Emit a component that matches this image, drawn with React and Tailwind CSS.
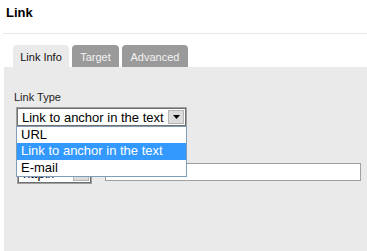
import React from 'react';

const LINK_TYPES = ['URL', 'Link to anchor in the text', 'E-mail'];

const Arrow = () => (
  <svg width="7" height="4" viewBox="0 0 7 4">
    <polygon points="0,0 7,0 3.5,4" fill="#000" />
  </svg>
);

const SelectBox = ({ value, className, button = 'w-[16px]' }) => (
  <div className={`flex bg-white border border-[#a0a0a0] shadow-[inset_0_0_0_1px_#6f6f6f] p-[2px] ${className}`}>
    <div className="flex-1 pl-[3px] text-[13px] leading-[15px] text-black whitespace-nowrap overflow-hidden">{value}</div>
    <div className={`${button} flex items-center justify-center bg-[#dcdcdc] border border-[#b5b5b5]`}>
      <Arrow />
    </div>
  </div>
);

export default function App() {
  const selected = 1;

  return (
    <div className="w-[367px] h-[251px] bg-white overflow-hidden font-['Liberation_Sans',Arial,sans-serif] text-[#222]">
      <div className="h-[33px] pl-[6px] pt-[5px] text-[13px] leading-[16px] font-bold text-black">Link</div>
      <div className="ml-[3px] h-px bg-[#e8e8e8]" />

      <div className="ml-[4px] pt-[11px]">
        {/* Tabs */}
        <div className="flex gap-[3px] pl-[9px] h-[22px]">
          <div className="w-[56px] rounded-t-[4px] bg-[#eaeaea] text-[11px] leading-[13px] pt-[6px] text-center text-[#111]">Link Info</div>
          <div className="w-[47px] rounded-t-[4px] bg-[#9a9a9a] text-[11px] leading-[13px] pt-[6px] text-center text-[#f4f4f4]">Target</div>
          <div className="w-[66px] rounded-t-[4px] bg-[#9a9a9a] text-[11px] leading-[13px] pt-[6px] text-center text-[#f4f4f4]">Advanced</div>
        </div>

        {/* Panel */}
        <div className="h-[184px] bg-[#eaeaea] pt-[24px]">
          <div className="pl-[10px] text-[11px] leading-[13px] text-[#222]">Link Type</div>

          <div className="relative ml-[12px] mt-[3px] w-[171px]">
            <SelectBox value={LINK_TYPES[selected]} className="h-[20px]" />
            <div className="absolute left-0 top-[19px] z-10 w-[171px] bg-white border border-[#7f9db9]">
              {LINK_TYPES.map((t, i) => (
                <div
                  key={t}
                  className={`h-[16.3px] pl-[4px] text-[13px] leading-[16px] ${i === selected ? 'bg-[#3399ff] text-white' : 'text-black'}`}
                >
                  {t}
                </div>
              ))}
            </div>
          </div>

          {/* Protocol + URL row */}
          <div className="flex items-start mt-[36px] pl-[13px]">
            <SelectBox value="http://" className="w-[75px] h-[21px]" />
            <div className="ml-[13px] w-[256px] h-[18px] bg-white border border-[#a0a0a0]" />
          </div>
        </div>
      </div>
    </div>
  );
}
